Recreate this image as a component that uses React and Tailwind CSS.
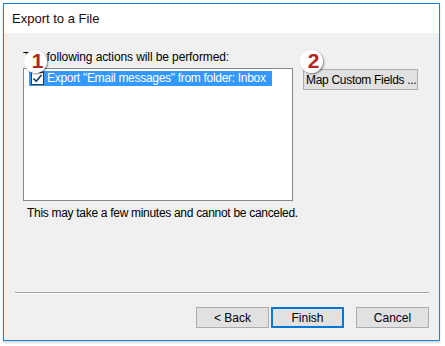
import React from "react";

function Badge({ n, className }) {
  return (
    <div
      className={
        "absolute w-[23px] h-[23px] rounded-full bg-white flex items-center justify-center shadow-[1px_1px_2px_rgba(0,0,0,0.45)] " +
        className
      }
    >
      <span className="text-[21px] leading-none font-bold text-[#b3261e] translate-x-[2px] -translate-y-[1px]" style={{ fontFamily: "'Liberation Sans', Arial, sans-serif" }}>
        {n}
      </span>
    </div>
  );
}

function Btn({ children, primary }) {
  return (
    <div
      className={
        "w-[73px] h-[21px] bg-[#e1e1e1] flex items-center justify-center text-[12px] text-black " +
        (primary ? "border-2 border-[#0078d7]" : "border border-[#adadad]")
      }
    >
      {children}
    </div>
  );
}

export default function App() {
  return (
    <div
      className="w-[445px] h-[346px] bg-white pt-[3px] pl-[3px]"
      style={{ fontFamily: "'Liberation Sans', Arial, sans-serif" }}
    >
      <div className="relative w-[437px] h-[338px] border border-[#1883d7] flex flex-col shadow-[0_2px_2px_rgba(0,0,0,0.15)]">
        <div className="h-[29px] bg-white flex items-center pl-[8px] text-[13px] text-[#111] shrink-0">
          Export to a File
        </div>
        <div className="flex-1 bg-[#f0f0f0] flex flex-col pl-[19px] pr-[10px] pt-[16px]">
          <div className="text-[12px] leading-[16px] text-black h-[16px] tracking-[-0.1px]">
            The following actions will be performed:
          </div>
          <div className="flex mt-[3px]">
            <div className="w-[270px] h-[133px] bg-white border border-[#828790] pt-[2px] pl-[5px]">
              <div className="flex items-center h-[15px] w-[243px] bg-[#3399ff]">
                <div className="w-[13px] h-[13px] ml-[2px] bg-white border border-[#3b3b3b] flex items-center justify-center shrink-0">
                  <svg width="11" height="11" viewBox="0 0 11 11">
                    <path d="M1.5 5.5 L4.2 8.3 L9.5 2" stroke="#1c3f73" strokeWidth="1.6" fill="none" />
                  </svg>
                </div>
                <span className="ml-[3px] text-[12px] text-white leading-[15px] whitespace-nowrap tracking-[-0.3px]">
                  Export "Email messages" from folder: Inbox
                </span>
              </div>
            </div>
            <div className="ml-[10px] mt-[1px]">
              <div className="w-[115px] h-[21px] bg-[#e1e1e1] border border-[#adadad] flex items-center pl-[2px] text-[12px] text-black whitespace-nowrap tracking-[-0.3px]">
                Map Custom Fields ...
              </div>
            </div>
          </div>
          <div className="mt-[4px] pl-[4px] text-[12px] leading-[16px] text-black tracking-[-0.3px]">
            This may take a few minutes and cannot be canceled.
          </div>
          <div className="mt-[71px] -ml-[8px] h-[2px] border-t border-[#a0a0a0] border-b border-b-white" />
          <div className="mt-[13px] flex justify-end">
            <Btn>&lt; Back</Btn>
            <div className="ml-[2px]">
              <Btn primary>Finish</Btn>
            </div>
            <div className="ml-[12px]">
              <Btn>Cancel</Btn>
            </div>
          </div>
        </div>
        <Badge n="1" className="left-[20px] top-[46px]" />
        <Badge n="2" className="left-[296px] top-[46px]" />
      </div>
    </div>
  );
}
